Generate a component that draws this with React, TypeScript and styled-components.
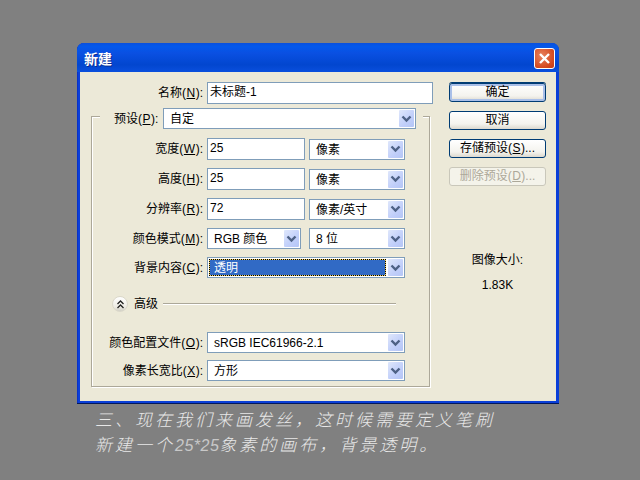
import styled, { createGlobalStyle } from "styled-components";

const UI_FONT = `"Liberation Sans", "Noto Sans CJK SC", sans-serif`;

const GlobalStyle = createGlobalStyle`
  html, body {
    margin: 0;
    padding: 0;
    background: #808080;
  }
`;

const ChevronDown = () => (
  <svg width="11" height="8" viewBox="0 0 11 8">
    <path d="M1.5 1.5 L5.5 5.5 L9.5 1.5" fill="none" stroke="#4d6185" strokeWidth="2.4" />
  </svg>
);

const Select = ({ width, text, active }: { width: number; text: string; active?: boolean }) => (
  <SelectBox $width={width}>
    <SelectValue $active={active}>{text}</SelectValue>
    <ArrowButton>
      <ChevronDown />
    </ArrowButton>
  </SelectBox>
);

const Key = ({ k }: { k: string }) => (
  <>
    (<KeyLetter>{k}</KeyLetter>)
  </>
);

const App = () => {
  return (
    <Page>
      <GlobalStyle />
      <Window>
        <TitleBar>
          <Title>新建</Title>
          <CloseButton>
            <svg width="13" height="13" viewBox="0 0 13 13">
              <path d="M2 2 L11 11 M11 2 L2 11" stroke="#fff" strokeWidth="2.4" />
            </svg>
          </CloseButton>
        </TitleBar>
        <Client>
          <LeftColumn>
            <NameRow>
              <Label>
                名称<Key k="N" />:
              </Label>
              <TextInput $width={226}>未标题-1</TextInput>
            </NameRow>
            <GroupBox>
              <PresetRow>
                <PresetLabel>
                  预设<Key k="P" />:
                </PresetLabel>
                <Select width={253} text="自定" />
              </PresetRow>
              <Row $top={9}>
                <Label $offset={-1}>
                  宽度<Key k="W" />:
                </Label>
                <TextInput $width={98}>25</TextInput>
                <Select width={96} text="像素" />
              </Row>
              <Row $top={8}>
                <Label $offset={-1}>
                  高度<Key k="H" />:
                </Label>
                <TextInput $width={98}>25</TextInput>
                <Select width={96} text="像素" />
              </Row>
              <Row $top={8}>
                <Label $offset={-1}>
                  分辨率<Key k="R" />:
                </Label>
                <TextInput $width={98}>72</TextInput>
                <Select width={96} text="像素/英寸" />
              </Row>
              <Row $top={8} $gap={8}>
                <Label $offset={-1} $pair>
                  颜色模式<Key k="M" />:
                </Label>
                <Select width={94} text="RGB 颜色" />
                <Select width={96} text="8 位" />
              </Row>
              <Row $top={8}>
                <Label $offset={-1}>
                  背景内容<Key k="C" />:
                </Label>
                <Select width={198} text="透明" active />
              </Row>
              <AdvancedRow>
                <RoundButton>
                  <svg width="9" height="9" viewBox="0 0 9 9">
                    <path
                      d="M1.5 4 L4.5 1 L7.5 4 M1.5 8 L4.5 5 L7.5 8"
                      fill="none"
                      stroke="#222"
                      strokeWidth="1.3"
                    />
                  </svg>
                </RoundButton>
                <AdvancedText>高级</AdvancedText>
                <Rule />
              </AdvancedRow>
              <Row $top={19}>
                <Label $offset={-1}>
                  颜色配置文件<Key k="O" />:
                </Label>
                <Select width={198} text="sRGB IEC61966-2.1" />
              </Row>
              <Row $top={7}>
                <Label $offset={-1}>
                  像素长宽比<Key k="X" />:
                </Label>
                <Select width={198} text="方形" />
              </Row>
            </GroupBox>
          </LeftColumn>
          <RightColumn>
            <Button $primary>确定</Button>
            <Button>取消</Button>
            <Button>
              存储预设<Key k="S" />
              ...
            </Button>
            <Button $disabled>
              删除预设<Key k="D" />
              ...
            </Button>
            <SizeTitle>图像大小:</SizeTitle>
            <SizeValue>1.83K</SizeValue>
          </RightColumn>
        </Client>
      </Window>
      <Caption>
        <div>三、现在我们来画发丝，这时候需要定义笔刷</div>
        <div>
          新建一个<CaptionDigits>25*25</CaptionDigits>象素的画布，背景透明。
        </div>
      </Caption>
    </Page>
  );
};
export default App;

const Page = styled.div`
  width: 640px;
  height: 480px;
  box-sizing: border-box;
  padding: 43px 0 0 77px;
  overflow: hidden;
  background: #808080;
  font-family: ${UI_FONT};
  font-size: 12px;
  color: #000;
`;

const Window = styled.div`
  width: 482px;
  height: 361px;
  box-sizing: border-box;
  display: flex;
  flex-direction: column;
  border-radius: 7px 7px 0 0;
  background: #0a3fd8;
  padding: 0 3px 3px;
  box-shadow: inset 0 -1px 0 #02185c, inset 1px 0 0 #0831c8;
`;

const TitleBar = styled.div`
  height: 29px;
  flex: none;
  display: flex;
  align-items: center;
  justify-content: space-between;
  padding: 2px 2px 0 3px;
  box-sizing: border-box;
  margin: 0 -3px;
  border-radius: 7px 7px 0 0;
  background: linear-gradient(180deg, #0a50dc 0%, #0458ea 12%, #0a50e2 35%, #0246cf 75%, #0a4fdd 100%);
`;

const Title = styled.div`
  margin-left: 4px;
  padding-bottom: 2px;
  font-size: 14px;
  font-weight: bold;
  color: #fff;
  text-shadow: 1px 1px 0 #0a2a90;
`;

const CloseButton = styled.div`
  width: 21px;
  height: 21px;
  box-sizing: border-box;
  margin-right: 2px;
  display: flex;
  align-items: center;
  justify-content: center;
  border: 1px solid #fff;
  border-radius: 3px;
  background: radial-gradient(circle at 35% 35%, #e8835f, #d4491f 70%, #c23a14);
`;

const Client = styled.div`
  flex: 1;
  display: flex;
  background: #ece9d8;
`;

const LeftColumn = styled.div`
  width: 369px;
  flex: none;
  padding: 10px 0 0 11px;
  box-sizing: border-box;
`;

const NameRow = styled.div`
  display: flex;
  align-items: center;
  height: 22px;
  gap: 4px;
`;

const KeyLetter = styled.u`
  margin: 0 0.5px;
`;

const Label = styled.div<{ $offset?: number; $pair?: boolean }>`
  width: ${(p) => 112 + (p.$offset ?? 0) - (p.$pair ? 4 : 0)}px;
  margin-left: ${(p) => (p.$pair ? 4 : 0)}px;
  margin-right: ${(p) => (p.$pair ? -4 : 0)}px;
  flex: none;
  padding-bottom: 3px;
  text-align: right;
  white-space: nowrap;
  font-size: 12px;
`;

const TextInput = styled.div<{ $width: number }>`
  width: ${(p) => p.$width}px;
  height: 22px;
  box-sizing: border-box;
  flex: none;
  background: #fff;
  border: 1px solid #7f9db9;
  padding: 0 2px;
  line-height: 18px;
  font-size: 12px;
`;

const GroupBox = styled.div`
  width: 339px;
  height: 271px;
  margin-top: 12px;
  box-sizing: border-box;
  border: 1px solid #aca899;
  box-shadow: 1px 1px 0 #fff, inset 1px 1px 0 #fff;
`;

const PresetRow = styled.div`
  display: flex;
  align-items: center;
  height: 21px;
  margin: -9px 0 0 8px;
  padding: 0 0 0 14px;
  width: 323px;
  box-sizing: border-box;
  gap: 4px;
  background: #ece9d8;
`;

const PresetLabel = styled.div`
  white-space: nowrap;
  width: 45px;
  flex: none;
  padding-bottom: 3px;
  font-size: 12px;
`;

const Row = styled.div<{ $top: number; $gap?: number }>`
  display: flex;
  align-items: center;
  gap: ${(p) => p.$gap ?? 4}px;
  margin-top: ${(p) => p.$top}px;
`;

const SelectBox = styled.div<{ $width: number }>`
  width: ${(p) => p.$width}px;
  height: 21px;
  box-sizing: border-box;
  flex: none;
  display: flex;
  align-items: center;
  background: #fff;
  border: 1px solid #7f9db9;
  padding: 1px;
`;

const SelectValue = styled.div<{ $active?: boolean }>`
  flex: 1;
  min-width: 0;
  height: 100%;
  line-height: 19px;
  padding-left: 5px;
  white-space: nowrap;
  font-size: 12px;
  color: ${(p) => (p.$active ? "#fff" : "#000")};
  background: ${(p) => (p.$active ? "#316ac5" : "transparent")};
  box-shadow: ${(p) => (p.$active ? "inset 0 0 0 1px #f0d060" : "none")};
  outline: ${(p) => (p.$active ? "1px dotted #000" : "none")};
  outline-offset: -1px;
`;

const ArrowButton = styled.div`
  width: 15px;
  height: 17px;
  flex: none;
  margin-left: 2px;
  display: flex;
  align-items: center;
  justify-content: center;
  border-radius: 1px;
  background: linear-gradient(135deg, #dfe7fb, #c1cffa 60%, #b4c5f6);
`;

const AdvancedRow = styled.div`
  display: flex;
  align-items: center;
  height: 18px;
  margin: 17px 0 0 20px;
`;

const RoundButton = styled.div`
  width: 16px;
  height: 16px;
  box-sizing: border-box;
  border-radius: 50%;
  display: flex;
  align-items: center;
  justify-content: center;
  background: linear-gradient(180deg, #fff, #eeece4 70%, #d2d0c6);
  border: 1px solid #dbd8ca;
`;

const AdvancedText = styled.div`
  margin-left: 6px;
  padding-bottom: 3px;
  font-size: 12px;
`;

const Rule = styled.div`
  width: 233px;
  margin-left: 5px;
  border-top: 1px solid #aca899;
  border-bottom: 1px solid #fff;
`;

const RightColumn = styled.div`
  flex: 1;
  display: flex;
  flex-direction: column;
  align-items: flex-start;
  padding: 11px 0 0 0;
`;

const Button = styled.div<{ $primary?: boolean; $disabled?: boolean }>`
  width: 97px;
  height: 19px;
  box-sizing: border-box;
  margin-bottom: 9px;
  border-radius: 3px;
  text-align: center;
  line-height: 16px;
  white-space: nowrap;
  font-size: 12px;
  border: 1px solid ${(p) => (p.$disabled ? "#c9c7ba" : "#003c74")};
  color: ${(p) => (p.$disabled ? "#aca899" : "#000")};
  background: ${(p) =>
    p.$disabled ? "#f4f3ea" : "linear-gradient(180deg, #fff, #f4f3ee 70%, #dcd8ce)"};
  box-shadow: ${(p) =>
    p.$primary ? "inset 0 0 0 2px #a9bfe8, 0 -1px 0 #003c74" : "none"};
`;

const SizeTitle = styled.div`
  width: 97px;
  margin-top: 55px;
  text-align: center;
  font-size: 12px;
`;

const SizeValue = styled.div`
  width: 97px;
  margin-top: 11px;
  text-align: center;
  font-size: 12px;
`;

const Caption = styled.div`
  margin: 2px 0 0 18px;
  font-family: "Noto Sans CJK SC", sans-serif;
  font-weight: 300;
  font-size: 17px;
  line-height: 25px;
  letter-spacing: 3px;
  font-style: italic;
  color: #e8e8e8;
  white-space: nowrap;
`;

const CaptionDigits = styled.span`
  font-family: "Liberation Sans", sans-serif;
  font-size: 16px;
  letter-spacing: 0.5px;
  color: #c8c8c8;
`;
